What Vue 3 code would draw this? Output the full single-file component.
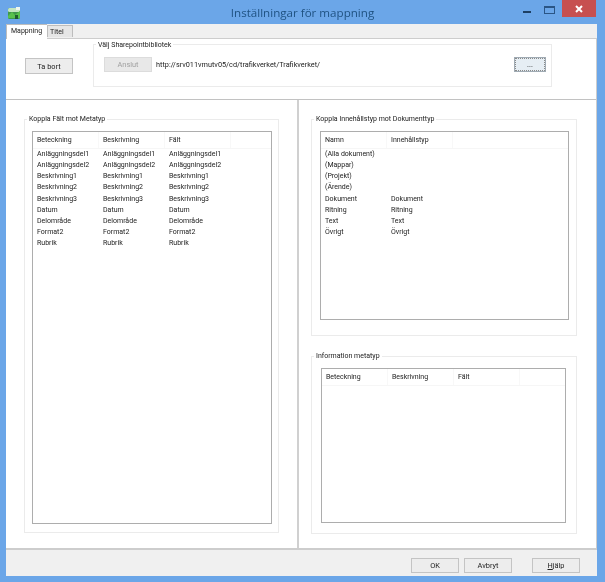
<template>
  <div class="window">
    <header class="titlebar">
      <svg class="app-icon" width="14" height="14" viewBox="0 0 14 14">
        <rect x="1" y="2" width="12" height="11" rx="1.5" fill="#3f9a4a" />
        <rect x="1" y="2" width="12" height="4" rx="1.5" fill="#c4e6c0" />
        <path d="M1 10 L5 6 L8 9 L13 5 V12 H1 Z" fill="#58c24c" />
        <rect x="9" y="1" width="4" height="3" fill="#eef6ee" />
        <rect x="8" y="9" width="3" height="4" fill="#1d5c2e" />
      </svg>
      <h1 class="title">Inställningar för mappning</h1>
      <div class="controls">
        <span class="ctl-min"></span>
        <span class="ctl-max"></span>
        <span class="ctl-close">
          <svg width="8" height="8" viewBox="0 0 8 8">
            <path d="M1 1 L7 7 M7 1 L1 7" stroke="#fff" stroke-width="2" />
          </svg>
        </span>
      </div>
    </header>

    <div class="client">
      <div class="tabs">
        <div class="tab active">Mappning</div>
        <div class="tab">Titel</div>
      </div>

      <div class="page">
        <section class="top">
          <button class="btn remove">Ta bort</button>
          <div class="group library">
            <span class="legend">Välj Sharepointbibliotek</span>
            <button class="btn disabled">Anslut</button>
            <span class="url">http://srv011vmutv05/cd/trafikverket/Trafikverket/</span>
            <button class="btn browse">...</button>
          </div>
        </section>

        <section class="panes">
          <div class="pane-left">
            <div class="group field-group">
              <span class="legend">Koppla Fält mot Metatyp</span>
              <div class="list">
                <div class="list-head">
                  <span v-for="h in fieldCols" :key="h" class="cell">{{ h }}</span>
                </div>
                <div v-for="name in fields" :key="name" class="row">
                  <span class="cell">{{ name }}</span>
                  <span class="cell">{{ name }}</span>
                  <span class="cell">{{ name }}</span>
                </div>
              </div>
            </div>
          </div>

          <div class="pane-right">
            <div class="group content-group">
              <span class="legend">Koppla Innehållstyp mot Dokumenttyp</span>
              <div class="list">
                <div class="list-head">
                  <span v-for="h in contentCols" :key="h" class="cell">{{ h }}</span>
                </div>
                <div v-for="item in contentTypes" :key="item.name" class="row">
                  <span class="cell">{{ item.name }}</span>
                  <span class="cell">{{ item.type }}</span>
                </div>
              </div>
            </div>

            <div class="group info-group">
              <span class="legend">Information metatyp</span>
              <div class="list">
                <div class="list-head">
                  <span v-for="h in fieldCols" :key="h" class="cell">{{ h }}</span>
                </div>
              </div>
            </div>
          </div>
        </section>
      </div>

      <footer class="footer">
        <button class="btn">OK</button>
        <button class="btn">Avbryt</button>
        <button class="btn help"><span class="ul">H</span>jälp</button>
      </footer>
    </div>
  </div>
</template>

<script setup>
const fieldCols = ['Beteckning', 'Beskrivning', 'Fält']
const contentCols = ['Namn', 'Innehållstyp']

const fields = [
  'Anläggningsdel1',
  'Anläggningsdel2',
  'Beskrivning1',
  'Beskrivning2',
  'Beskrivning3',
  'Datum',
  'Delområde',
  'Format2',
  'Rubrik',
]

const contentTypes = [
  { name: '(Alla dokument)', type: '' },
  { name: '(Mappar)', type: '' },
  { name: '(Projekt)', type: '' },
  { name: '(Ärende)', type: '' },
  { name: 'Dokument', type: 'Dokument' },
  { name: 'Ritning', type: 'Ritning' },
  { name: 'Text', type: 'Text' },
  { name: 'Övrigt', type: 'Övrigt' },
]
</script>

<style>
html,
body {
  margin: 0;
  background: #6ba6e8;
}
</style>

<style scoped>
.window {
  width: 605px;
  height: 582px;
  display: flex;
  flex-direction: column;
  background: #6ba6e8;
  font-family: Roboto, "Liberation Sans", sans-serif;
  font-size: 7px;
  color: #222;
  overflow: hidden;
  filter: blur(0.3px);
}

.titlebar {
  position: relative;
  height: 24px;
  flex: none;
  display: flex;
  align-items: center;
  justify-content: center;
}

.app-icon {
  position: absolute;
  left: 7px;
  top: 6px;
}

.title {
  margin: 1px 0 0 0;
  font-family: "Open Sans", sans-serif;
  font-size: 11.6px;
  font-weight: 400;
  color: #1f5282;
}

.controls {
  position: absolute;
  top: 0;
  right: 9px;
  display: flex;
}

.ctl-min {
  width: 8px;
  height: 2px;
  margin: 11px 13px 0 0;
  background: #1d3f63;
}

.ctl-max {
  width: 9px;
  height: 5px;
  margin: 6px 7px 0 0;
  border: 1px solid #2a5585;
  border-top-width: 2px;
}

.ctl-close {
  width: 34px;
  height: 17px;
  display: flex;
  align-items: center;
  justify-content: center;
  background: #c75050;
}

.client {
  flex: 1;
  margin: 0 8px 6px 6px;
  display: flex;
  flex-direction: column;
  background: #f0f0f0;
  min-height: 0;
}

.tabs {
  height: 14px;
  flex: none;
  display: flex;
  align-items: flex-end;
}

.tab {
  box-sizing: border-box;
  height: 12px;
  line-height: 12px;
  width: 26px;
  padding-left: 2px;
  background: #e6e6e6;
  border: 1px solid #bdbdbd;
  border-bottom: 0;
  margin-bottom: 1px;
}

.tab.active {
  height: 15px;
  width: 41px;
  line-height: 13px;
  padding-left: 4px;
  background: #fff;
  border-right: 0;
  margin-bottom: -1px;
  position: relative;
  z-index: 1;
}

.page {
  flex: 1;
  min-height: 0;
  display: flex;
  flex-direction: column;
  background: #fff;
  border: 1px solid #cdcdcd;
  border-width: 1px 1px 2px 0;
}

.top {
  height: 60px;
  flex: none;
  display: flex;
  align-items: flex-start;
  border-bottom: 1px solid #c2c2c2;
}

.group {
  position: relative;
  box-sizing: border-box;
  border: 1px solid #ebebeb;
}

.legend {
  position: absolute;
  top: -6px;
  left: 2px;
  padding: 0 2px;
  line-height: 11px;
  background: #fff;
  white-space: nowrap;
}

.library .legend {
  top: -5px;
}

.btn {
  width: 48px;
  height: 15px;
  padding: 0;
  box-sizing: border-box;
  font-family: inherit;
  font-size: 7.4px;
  color: #222;
  background: #ededed;
  border: 1px solid #c4c4c4;
}

.remove {
  height: 16px;
  margin: 19px 0 0 19px;
}

.library {
  width: 459px;
  height: 43px;
  margin: 5px 0 0 20px;
  padding: 12px 5px 0 10px;
  display: flex;
  align-items: flex-start;
}

.disabled {
  color: #a0a0a0;
  background: #e8e8e8;
  border-color: #dcdcdc;
}

.url {
  margin-left: 4px;
  font-size: 7.3px;
  line-height: 15px;
  flex: 1;
}

.browse {
  width: 32px;
  background: #e6eef4;
  border: 1px solid #a0abb4;
  outline: 1px dotted #8a8a8a;
  outline-offset: -2px;
}

.panes {
  flex: 1;
  min-height: 0;
  display: flex;
}

.pane-left {
  width: 293px;
  box-sizing: border-box;
  padding: 19px 0 0 18px;
  border-right: 2px solid #d0d0d0;
}

.pane-right {
  flex: 1;
  padding: 19px 0 0 12px;
}

.field-group {
  width: 255px;
  height: 414px;
  padding: 11px 0 0 7px;
}

.content-group {
  width: 266px;
  height: 217px;
  padding: 11px 0 0 8px;
}

.info-group {
  width: 266px;
  height: 178px;
  margin-top: 20px;
  padding: 11px 0 0 9px;
}

.field-group .list {
  width: 240px;
  height: 393px;
}

.content-group .list {
  width: 249px;
  height: 189px;
}

.info-group .list {
  width: 245px;
  height: 155px;
}

.list {
  box-sizing: border-box;
  border: 1px solid #adadad;
  background: #fff;
}

.list-head {
  height: 16px;
  display: flex;
  align-items: center;
  border-bottom: 1px solid #f6f6f6;
}

.list-head .cell {
  line-height: 16px;
  border-right: 1px solid #f8f8f8;
}

.row {
  height: 11.17px;
  display: flex;
  line-height: 11px;
}

.cell {
  box-sizing: border-box;
  width: 66px;
  padding-left: 4px;
  white-space: nowrap;
}

.footer {
  box-sizing: border-box;
  height: 26px;
  flex: none;
  display: flex;
  justify-content: flex-end;
  align-items: flex-start;
  gap: 5px;
  padding: 8px 17px 0 0;
}

.help {
  margin-left: 15px;
}

.ul {
  text-decoration: underline;
}
</style>
